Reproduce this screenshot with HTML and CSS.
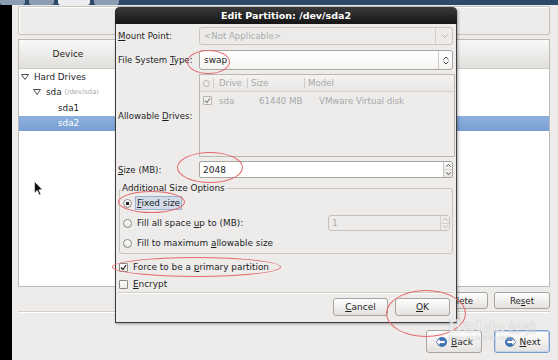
FILE: index.html
```html
<!DOCTYPE html>
<html lang="en">
  <head>
    <title>Edit Partition: /dev/sda2</title>
  <link rel="stylesheet" href="styles.css">
  </head>
  <body>
  <div class="tabs">
    <span class="tab"></span>
    <span class="tab"></span>
    <span class="tab active"></span>
    <span class="tab"></span>
  </div>

  <div class="screen">
    <div class="edge"></div>
    <div class="installer">
      <div class="top-frame"></div>

      <div class="devices">
        <div class="devices-head">
          <div class="col-device">Device</div>
        </div>
        <div class="devices-body">
          <div class="node lvl0">
            <svg class="expander" width="8" height="6" viewBox="0 0 8 6"><path d="M0.5 0.5 H7.5 L4 5.5 Z" fill="#fff" stroke="#4a4a4a"/></svg>
            Hard Drives
          </div>
          <div class="node lvl1">
            <svg class="expander" width="8" height="6" viewBox="0 0 8 6"><path d="M0.5 0.5 H7.5 L4 5.5 Z" fill="#fff" stroke="#4a4a4a"/></svg>
            sda <span class="dev-path">(/dev/sda)</span>
          </div>
          <div class="node lvl2">sda1</div>
          <div class="node lvl2 selected">sda2</div>
        </div>
      </div>

      <div class="actions">
        <button class="btn btn-delete"><span><u>D</u>elete</span></button>
        <button class="btn btn-reset"><span>Re<u>s</u>et</span></button>
      </div>
      <div class="rule"></div>
      <div class="nav">
        <button class="btn btn-nav">
          <svg width="13" height="12" viewBox="0 0 13 12"><circle cx="7" cy="6" r="5" fill="#3f73b8"/><path d="M1 6 L5 2.5 V4.5 H10 V7.5 H5 V9.5 Z" fill="#fff" stroke="#2d5a98" stroke-width="0.6"/></svg>
          <span><u>B</u>ack</span>
        </button>
        <button class="btn btn-nav btn-default">
          <svg width="13" height="12" viewBox="0 0 13 12"><circle cx="6" cy="6" r="5" fill="#3f73b8"/><path d="M12 6 L8 2.5 V4.5 H3 V7.5 H8 V9.5 Z" fill="#fff" stroke="#2d5a98" stroke-width="0.6"/></svg>
          <span><u>N</u>ext</span>
        </button>
      </div>
    </div>
  </div>

  <div class="dialog">
    <div class="dialog-title">Edit Partition: /dev/sda2</div>
    <div class="dialog-body">
      <div class="field-row row-mount">
        <div class="label"><u>M</u>ount Point:</div>
        <div class="combo combo-off">
          <span class="combo-text">&lt;Not Applicable&gt;</span>
          <span class="combo-btn">
            <svg width="7" height="4" viewBox="0 0 7 4"><path d="M0.5 0.5 L3.5 3.5 L6.5 0.5" fill="none" stroke="#b3afa9"/></svg>
          </span>
        </div>
      </div>

      <div class="field-row row-fs">
        <div class="label">File System <u>T</u>ype:</div>
        <div class="combo combo-on">
          <span class="combo-text">swap</span>
          <span class="combo-btn">
            <svg width="6" height="9" viewBox="0 0 6 9"><path d="M0.5 3.5 L3 1 L5.5 3.5 M0.5 5.5 L3 8 L5.5 5.5" fill="none" stroke="#444"/></svg>
          </span>
        </div>
      </div>

      <div class="field-row row-drives">
        <div class="label">Allowable <u>D</u>rives:</div>
        <div class="drives">
          <div class="drives-head">
            <span class="dh dh-0"><i class="dh-radio"></i></span>
            <span class="dh dh-1">Drive</span>
            <span class="dh dh-2">Size</span>
            <span class="dh dh-3">Model</span>
          </div>
          <div class="drives-row">
            <span class="dc dc-0">
              <i class="check check-off">
                <svg width="7" height="7" viewBox="0 0 7 7"><path d="M1 3.5 L3 5.5 L6 1" fill="none" stroke="#8a8a8a" stroke-width="1.2"/></svg>
              </i>
            </span>
            <span class="dc dc-1">sda</span>
            <span class="dc dc-2">61440 MB</span>
            <span class="dc dc-3">VMware Virtual disk</span>
          </div>
        </div>
      </div>

      <div class="field-row row-size">
        <div class="label"><u>S</u>ize (MB):</div>
        <div class="spin">
          <span class="spin-text">2048</span>
          <span class="spin-btns">
            <span><svg width="5" height="3" viewBox="0 0 5 3"><path d="M0.5 2.5 L2.5 0.5 L4.5 2.5" fill="none" stroke="#444"/></svg></span>
            <span><svg width="5" height="3" viewBox="0 0 5 3"><path d="M0.5 0.5 L2.5 2.5 L4.5 0.5" fill="none" stroke="#444"/></svg></span>
          </span>
        </div>
      </div>

      <fieldset class="size-options">
        <legend>Additional Size Options</legend>
        <div class="opt">
          <i class="radio radio-on"></i>
          <span class="opt-label focused"><u>F</u>ixed size</span>
        </div>
        <div class="opt">
          <i class="radio"></i>
          <span class="opt-label">Fill all space <u>u</u>p to (MB):</span>
          <div class="spin spin-off">
            <span class="spin-text">1</span>
            <span class="spin-btns">
              <span><svg width="5" height="3" viewBox="0 0 5 3"><path d="M0.5 2.5 L2.5 0.5 L4.5 2.5" fill="none" stroke="#b5b1ab"/></svg></span>
              <span><svg width="5" height="3" viewBox="0 0 5 3"><path d="M0.5 0.5 L2.5 2.5 L4.5 0.5" fill="none" stroke="#b5b1ab"/></svg></span>
            </span>
          </div>
        </div>
        <div class="opt">
          <i class="radio"></i>
          <span class="opt-label">Fill to maximum <u>a</u>llowable size</span>
        </div>
      </fieldset>

      <div class="check-row row-force">
        <i class="check">
          <svg width="7" height="7" viewBox="0 0 7 7"><path d="M1 3.5 L3 5.5 L6 1" fill="none" stroke="#222" stroke-width="1.2"/></svg>
        </i>
        <span>Force to be a <u>p</u>rimary partition</span>
      </div>
      <div class="check-row row-encrypt">
        <i class="check"></i>
        <span><u>E</u>ncrypt</span>
      </div>

      <div class="dialog-rule"></div>
      <div class="dialog-actions">
        <button class="btn btn-dialog"><span><u>C</u>ancel</span></button>
        <button class="btn btn-dialog"><span><u>O</u>K</span></button>
      </div>
    </div>
  </div>

  <div class="mark mark-swap"></div>
  <div class="mark mark-size"></div>
  <div class="mark mark-fixed"></div>
  <div class="mark mark-force"></div>
  <div class="mark mark-ok"></div>

  <svg class="pointer" width="9" height="15" viewBox="0 0 9 15"><path d="M0.5 0.5 V12 L3.3 9.4 L5.2 14 L6.8 13.3 L4.9 8.8 H8.5 Z" fill="#111" stroke="#fff" stroke-width="0.6"/></svg>

  <div class="watermark">
    <span class="wm-bai">Bai</span><span class="wm-du">du</span><span class="wm-cn">经验</span>
    <div class="wm-url">jingyan.baidu.com</div>
  </div>
  </body>
</html>
```

FILE: styles.css
```css
* {
  margin: 0;
  padding: 0;
  box-sizing: border-box;
}

body {
  position: relative;
  width: 558px;
  height: 360px;
  overflow: hidden;
  background: #edeceb;
  font-family: "DejaVu Sans", sans-serif;
  font-size: 8.6px;
  color: #1e1e1e;
}

u {
  text-decoration-thickness: 1px;
  text-underline-offset: 1px;
}

/* background installer window */
.tabs {
  height: 5px;
  display: flex;
  gap: 4px;
  background: #2e4a6b;
}

.tab {
  width: 25px;
  background: #8c9db2;
  border-radius: 0 0 3px 3px;
}

.tab.active {
  width: 32px;
  background: #eceef1;
}

.screen {
  display: flex;
  height: 355px;
}

.edge {
  width: 12px;
  background: #000;
}

.installer {
  flex: 1;
  display: flex;
  flex-direction: column;
  padding: 1px 8px 0 6px;
}

.top-frame {
  height: 29px;
  border: 1px solid #c6c3be;
  border-radius: 2px;
  box-shadow: inset 1px 1px 0 #fff;
}

.devices {
  margin-top: 4px;
  height: 248px;
  border: 1px solid #bdbab5;
  background: #fff;
  display: flex;
  flex-direction: column;
}

.devices-head {
  height: 29px;
  flex: none;
  display: flex;
  background: linear-gradient(#f8f8f7, #e2e0dd);
  border-bottom: 1px solid #cdcac5;
}

.col-device {
  width: 99px;
  display: flex;
  align-items: center;
  justify-content: center;
  border-right: 1px solid #d0cdc8;
  font-size: 9px;
}

.node {
  height: 15.5px;
  display: flex;
  align-items: center;
  gap: 5px;
  font-size: 8.8px;
}

.lvl0 { padding-left: 2px; }
.lvl1 { padding-left: 14px; }
.lvl2 { padding-left: 39px; }

.dev-path {
  margin-left: -2px;
  font-size: 6.8px;
  color: #a9a9a9;
}

.selected {
  background: linear-gradient(#8db1dd, #779fd2);
  color: #fff;
}

.btn {
  height: 100%;
  display: flex;
  align-items: center;
  justify-content: center;
  border: 1px solid #a7a49f;
  border-radius: 3px;
  background: linear-gradient(#fefefe, #e4e2df);
  font: inherit;
  color: #1e1e1e;
}

.actions {
  margin-top: 5px;
  height: 17px;
  display: flex;
  justify-content: flex-end;
  gap: 6px;
}

.btn-delete { width: 58px; }
.btn-reset { width: 56px; }

.rule {
  margin-top: 2px;
  border-top: 1px solid #d3d0cb;
  border-bottom: 1px solid #fff;
}

.nav {
  margin-top: 17px;
  height: 23px;
  display: flex;
  justify-content: flex-end;
  gap: 12px;
}

.btn-nav {
  width: 56px;
  gap: 3px;
  font-size: 9px;
}

.btn-default {
  border-color: #7b9bcc;
  box-shadow: inset 0 0 0 1px #c4d4ec;
}

/* dialog */
.dialog {
  position: absolute;
  left: 115px;
  top: 7px;
  width: 342px;
  border: 1px solid #3c3c3c;
  border-top: none;
  border-radius: 5px 5px 0 0;
  background: #edeceb;
  box-shadow: 1px 1px 3px rgba(0,0,0,0.35);
}

.dialog-title {
  height: 17px;
  line-height: 17px;
  margin: 0 -1px;
  text-align: center;
  font-size: 9.5px;
  font-weight: bold;
  color: #fff;
  background: linear-gradient(#3a3a3a, #151515);
  border-radius: 5px 5px 0 0;
}

.dialog-body {
  display: flex;
  flex-direction: column;
  padding: 0 3px 6px 2px;
}

.field-row {
  display: flex;
  align-items: center;
}

.label {
  width: 81px;
  flex: none;
}

.row-mount { margin-top: 3px; height: 18px; }
.row-fs { margin-top: 5px; height: 20px; }
.row-drives { margin-top: 4px; height: 83px; }
.row-size { margin-top: 4px; height: 17px; }

.combo {
  flex: 1;
  height: 100%;
  display: flex;
  align-items: center;
  border: 1px solid;
  border-radius: 3px;
}

.combo-text {
  flex: 1;
  padding-left: 4px;
}

.combo-btn {
  align-self: stretch;
  display: flex;
  align-items: center;
  justify-content: center;
  border-left: 1px solid;
}

.combo-off {
  border-color: #cac7c2;
  background: #ecebe9;
  color: #ababab;
}

.combo-off .combo-btn {
  width: 17px;
  border-color: #d3d0cb;
}

.combo-on {
  border-color: #a9a6a1;
  background: linear-gradient(#fff, #f5f4f3);
  font-size: 9px;
}

.combo-on .combo-btn {
  width: 14px;
  border-color: #cfccc7;
}

.drives {
  flex: 1;
  height: 100%;
  margin-right: -2px;
  border: 1px solid #bbb8b3;
  background: #edeceb;
  color: #a8a8a8;
}

.drives-head {
  height: 17px;
  display: flex;
  border-bottom: 1px solid #d6d3ce;
  background: linear-gradient(#f4f3f2, #e8e7e5);
}

.dh {
  display: flex;
  align-items: center;
  margin: 3px 0;
  border-left: 1px solid #cfccc7;
}

.dh-0 { width: 13px; padding-left: 3px; border-left: none; }
.dh-1 { width: 34px; padding-left: 5px; }
.dh-2 { width: 57px; padding-left: 3px; }
.dh-3 { flex: 1; padding-left: 3px; }

.dh-radio {
  width: 7px;
  height: 7px;
  border: 1px solid #b9b6b1;
  border-radius: 50%;
}

.drives-row {
  height: 17px;
  display: flex;
  align-items: center;
}

.dc-0 { width: 13px; padding-left: 3px; display: flex; }
.dc-1 { width: 34px; padding-left: 6px; }
.dc-2 { width: 57px; padding-left: 12px; }
.dc-3 { padding-left: 15px; }

.check {
  width: 9px;
  height: 9px;
  flex: none;
  display: flex;
  align-items: center;
  justify-content: center;
  border: 1px solid #8d8a85;
  border-radius: 1px;
  background: linear-gradient(#fff, #ecebe9);
}

.check-off {
  border-color: #b7b4af;
  background: #f2f1f0;
}

.spin {
  flex: 1;
  height: 100%;
  display: flex;
  border: 1px solid #a9a6a1;
  border-radius: 2px;
  background: #fff;
}

.spin-text {
  flex: 1;
  display: flex;
  align-items: center;
  padding-left: 3px;
  font-size: 9px;
}

.spin-btns {
  width: 9px;
  display: flex;
  flex-direction: column;
  border-left: 1px solid #cbc8c3;
  background: linear-gradient(#f9f9f9, #e6e4e1);
}

.spin-btns span {
  flex: 1;
  display: flex;
  align-items: center;
  justify-content: center;
}

.spin-btns span + span {
  border-top: 1px solid #d6d3ce;
}

.size-options {
  margin: 5px 0 0 1px;
  padding: 0 0 0 3px;
  border: 1px solid #c9c6c1;
  border-radius: 3px;
  font-size: 8.9px;
}

.size-options legend {
  margin-left: -2px;
  padding: 0 1px;
  line-height: 10px;
}

.opt {
  height: 20px;
  display: flex;
  align-items: center;
}

.radio {
  width: 9px;
  height: 9px;
  flex: none;
  border: 1px solid #8d8a85;
  border-radius: 50%;
  background: linear-gradient(#fff, #e7e5e2);
}

.radio-on {
  background: radial-gradient(circle, #222 0, #222 1.6px, transparent 2px), linear-gradient(#fff, #e7e5e2);
}

.opt-label {
  margin-left: 3px;
  padding: 1px 1px;
  border: 1px solid transparent;
}

.opt-label.focused {
  background: #d2dbe9;
  border-color: #9db0cd;
}

.spin-off {
  flex: none;
  width: 122px;
  height: 16px;
  margin: 0 2px 0 auto;
  border-color: #c5c2bd;
  border-radius: 3px;
  background: #edeceb;
  color: #acacac;
}

.spin-off .spin-btns {
  background: #edeceb;
  border-color: #d3d0cb;
}

.check-row {
  display: flex;
  align-items: center;
  gap: 5px;
  padding-left: 1px;
  font-size: 8.9px;
}

.row-force { margin-top: 4px; height: 18px; }
.row-encrypt { height: 16px; }

.dialog-rule {
  border-top: 1px solid #d1cec9;
  border-bottom: 1px solid #fff;
}

.dialog-actions {
  margin-top: 4px;
  height: 18px;
  display: flex;
  justify-content: flex-end;
  gap: 7px;
  padding-right: 3px;
}

.btn-dialog {
  width: 55px;
  font-size: 9px;
}

/* annotations drawn over the screenshot */
.mark {
  position: absolute;
  border: 1px solid #e5686b;
  border-radius: 50%;
}

.mark-swap { left: 187px; top: 50px; width: 43px; height: 24px; }
.mark-size { left: 177px; top: 152px; width: 66px; height: 31px; }
.mark-fixed { left: 118px; top: 191px; width: 67px; height: 22px; }
.mark-force { left: 112px; top: 257px; width: 169px; height: 20px; }
.mark-ok { left: 386px; top: 290px; width: 80px; height: 47px; }

.pointer {
  position: absolute;
  left: 34px;
  top: 181px;
}

.watermark {
  position: absolute;
  left: 448px;
  top: 315px;
  color: rgba(255,255,255,0.75);
  text-shadow: 0 0 1px rgba(120,120,120,0.6);
  opacity: 0.8;
  white-space: nowrap;
}

.wm-bai {
  font-family: "DejaVu Sans", sans-serif;
  font-weight: bold;
  font-size: 19px;
}

.wm-du {
  margin-left: 2px;
  font-weight: bold;
  font-size: 15px;
}

.wm-cn {
  margin-left: 3px;
  font-family: "Noto Sans CJK SC", sans-serif;
  font-size: 14px;
}

.wm-url {
  margin-top: -3px;
  font-size: 7px;
}
```
